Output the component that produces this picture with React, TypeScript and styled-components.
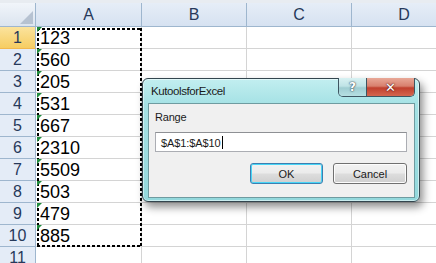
import React from "react";
import styled, { createGlobalStyle } from "styled-components";

const GlobalStyle = createGlobalStyle`
  html, body {
    margin: 0;
    padding: 0;
    width: 436px;
    height: 263px;
    overflow: hidden;
    background: #ffffff;
    font-family: "Liberation Sans", Arial, sans-serif;
  }
`;

const Page = styled.div`
  position: relative;
  width: 436px;
  height: 263px;
  overflow: hidden;
  padding-top: 3px;
  box-sizing: border-box;
  background: #e8ecf1;
`;

const Sheet = styled.div`
  display: grid;
  grid-template-columns: 36px 106px 105px 105px 105px;
  grid-template-rows: 24px repeat(11, 22px);
  background: #ffffff;
`;

const Corner = styled.div`
  display: flex;
  align-items: flex-end;
  justify-content: flex-end;
  padding: 0 2px 2px 0;
  box-sizing: border-box;
  background: linear-gradient(#f1f5fa, #dbe4ef);
  border-right: 1px solid #9eb6ce;
  border-bottom: 1px solid #9eb6ce;
`;

const CornerMark = styled.div`
  width: 13px;
  height: 13px;
  background: #b6c2d1;
  clip-path: polygon(100% 0, 100% 100%, 0 100%);
`;

const ColHead = styled.div`
  display: flex;
  align-items: center;
  justify-content: center;
  box-sizing: border-box;
  background: linear-gradient(#e6edf7, #d6e2f1);
  border-right: 1px solid #9eb6ce;
  border-bottom: 1px solid #9eb6ce;
  color: #27395a;
  font-size: 16px;
  padding-top: 1px;
`;

const RowHead = styled.div<{ $active?: boolean }>`
  display: flex;
  align-items: center;
  justify-content: center;
  box-sizing: border-box;
  background: ${(p) =>
    p.$active ? "linear-gradient(#fbe39d, #f6cd62)" : "#e4ecf7"};
  border-right: 1px solid #9eb6ce;
  border-bottom: 1px solid ${(p) => (p.$active ? "#f2b84e" : "#9eb6ce")};
  color: #27395a;
  font-size: 16px;
  padding-top: 1px;
`;

const Cell = styled.div<{ $flag?: boolean }>`
  position: relative;
  display: flex;
  align-items: center;
  box-sizing: border-box;
  padding: 1px 0 0 4px;
  border-right: 1px solid #d4d4d4;
  border-bottom: 1px solid #d4d4d4;
  font-size: 18px;
  color: #000000;

  ${(p) =>
    p.$flag &&
    `
    &::before {
      content: "";
      position: absolute;
      z-index: 2;
      left: 1px;
      top: 0;
      width: 0;
      height: 0;
      border-top: 5px solid #1f8a3c;
      border-right: 5px solid transparent;
    }
  `}
`;

const dash = "#000 0 3px, transparent 3px 5px";

const Marquee = styled.div`
  position: absolute;
  z-index: 1;
  left: 37px;
  top: 28px;
  width: 105px;
  height: 219px;
  pointer-events: none;
  background:
    repeating-linear-gradient(90deg, ${dash}) top left / 100% 2px no-repeat,
    repeating-linear-gradient(90deg, ${dash}) bottom left / 100% 2px no-repeat,
    repeating-linear-gradient(180deg, ${dash}) top left / 2px 100% no-repeat,
    repeating-linear-gradient(180deg, ${dash}) top right / 2px 100% no-repeat;
`;

const Dialog = styled.div`
  position: absolute;
  z-index: 3;
  left: 142px;
  top: 78px;
  width: 278px;
  height: 124px;
  box-sizing: border-box;
  display: flex;
  flex-direction: column;
  border: 1px solid #33454e;
  border-radius: 6px;
  background: linear-gradient(#c2eef0 0%, #a6e2e5 20%, #93d8dc 100%);
  box-shadow: 3px 5px 8px rgba(0, 0, 0, 0.45), inset 0 0 0 1px rgba(255, 255, 255, 0.5);
`;

const TitleBar = styled.div`
  height: 24px;
  display: flex;
  align-items: flex-start;
  padding: 0 4px 0 8px;
`;

const Title = styled.div`
  flex: 1;
  padding-top: 6px;
  font-size: 11.5px;
  letter-spacing: -0.4px;
  color: #1a1a1a;
`;

const CaptionButtons = styled.div`
  display: flex;
  margin-top: -1px;
  border: 1px solid #3d5561;
  border-top: none;
  border-radius: 0 0 5px 5px;
  overflow: hidden;
`;

const CaptionButton = styled.div<{ $close?: boolean }>`
  width: ${(p) => (p.$close ? 47 : 27)}px;
  height: 18px;
  display: flex;
  align-items: center;
  justify-content: center;
  font-family: "DejaVu Sans", sans-serif;
  font-weight: bold;
  font-size: ${(p) => (p.$close ? 13 : 12)}px;
  color: #ffffff;
  text-shadow: ${(p) =>
    p.$close
      ? "0 0 2px #5a1510, 0 0 1px #5a1510"
      : "0 0 2px #2d3e4a, 0 0 1px #2d3e4a"};
  background: ${(p) =>
    p.$close
      ? "linear-gradient(#e8a897 0%, #d8806e 45%, #c0402e 55%, #d4664f 100%)"
      : "linear-gradient(#d8f1f2 0%, #bfe3e6 45%, #9fcdd2 55%, #b6dfe2 100%)"};
  border-left: ${(p) => (p.$close ? "1px solid #3d5561" : "none")};
`;

const Panel = styled.div`
  flex: 1;
  margin: 0 4px 3px 5px;
  box-sizing: border-box;
  border: 1px solid #6f9ba0;
  background: #f0f0f0;
  display: flex;
  flex-direction: column;
  padding: 7px 7px 0 6px;
  font-size: 11px;
  color: #1a1a1a;
`;

const Label = styled.div`
  height: 13px;
  letter-spacing: -0.2px;
`;

const Input = styled.div`
  margin-top: 8px;
  height: 20px;
  box-sizing: border-box;
  border: 1px solid #abadb3;
  border-top-color: #8e9094;
  background: #ffffff;
  display: flex;
  align-items: center;
  padding: 1px 0 0 5px;
  letter-spacing: -0.1px;
`;

const Caret = styled.span`
  display: inline-block;
  width: 1px;
  height: 13px;
  background: #000000;
  margin-left: 1px;
`;

const ButtonRow = styled.div`
  display: flex;
  justify-content: flex-end;
  gap: 10px;
  margin-top: 11px;
`;

const Button = styled.div<{ $default?: boolean }>`
  width: ${(p) => (p.$default ? 73 : 74)}px;
  height: 21px;
  box-sizing: border-box;
  display: flex;
  align-items: center;
  justify-content: center;
  border-radius: 3px;
  border: 1px solid ${(p) => (p.$default ? "#3c7fb1" : "#707070")};
  background: linear-gradient(#f2f2f2 0%, #ebebeb 48%, #dddddd 52%, #cfcfcf 100%);
  box-shadow: ${(p) =>
    p.$default
      ? "inset 0 0 0 1px #48d5f6"
      : "inset 0 0 0 1px #fcfcfc"};
`;

const numbers = ["123", "560", "205", "531", "667", "2310", "5509", "503", "479", "885", ""];

export default function App() {
  return (
    <Page>
      <GlobalStyle />
      <Sheet>
        <Corner>
          <CornerMark />
        </Corner>
        {["A", "B", "C", "D"].map((c) => (
          <ColHead key={c}>{c}</ColHead>
        ))}
        {numbers.map((n, i) => (
          <React.Fragment key={i}>
            <RowHead $active={i === 0}>{i + 1}</RowHead>
            <Cell $flag={n !== ""}>{n}</Cell>
            <Cell />
            <Cell />
            <Cell />
          </React.Fragment>
        ))}
      </Sheet>
      <Marquee />
      <Dialog>
        <TitleBar>
          <Title>KutoolsforExcel</Title>
          <CaptionButtons>
            <CaptionButton>?</CaptionButton>
            <CaptionButton $close>✕</CaptionButton>
          </CaptionButtons>
        </TitleBar>
        <Panel>
          <Label>Range</Label>
          <Input>
            $A$1:$A$10
            <Caret />
          </Input>
          <ButtonRow>
            <Button $default>OK</Button>
            <Button>Cancel</Button>
          </ButtonRow>
        </Panel>
      </Dialog>
    </Page>
  );
}
